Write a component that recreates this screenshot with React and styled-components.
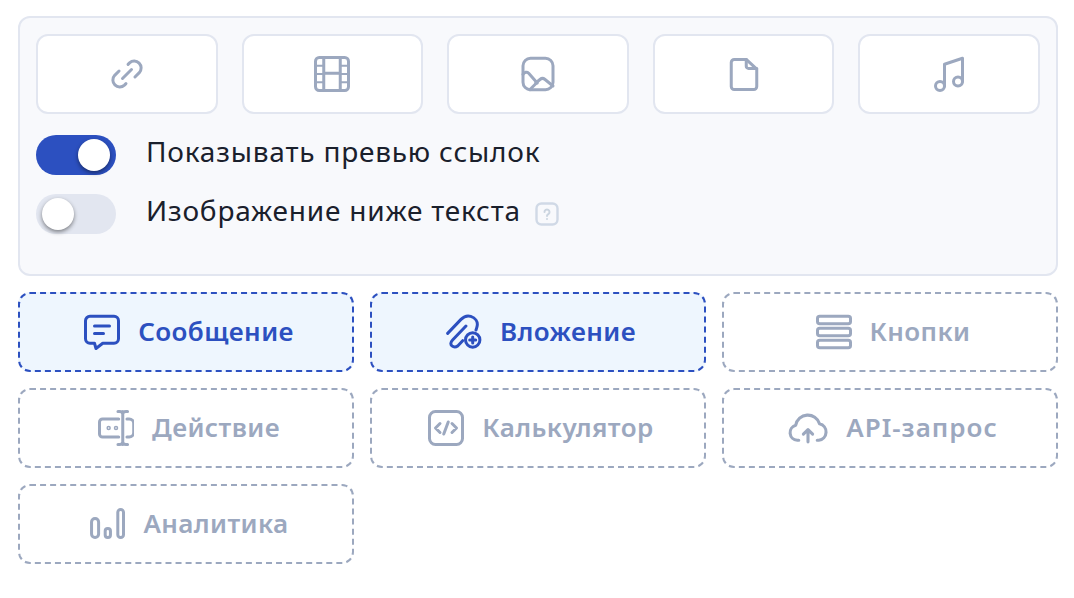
import React from 'react';
import styled, { createGlobalStyle } from 'styled-components';

const GlobalStyle = createGlobalStyle`
  html, body {
    margin: 0;
    padding: 0;
    background: #ffffff;
  }
  * {
    box-sizing: border-box;
  }
`;

const Page = styled.div`
  width: 1074px;
  height: 598px;
  padding: 16px 16px 0 18px;
  font-family: 'Noto Sans', sans-serif;
  overflow: hidden;
`;

const Panel = styled.section`
  height: 260px;
  padding: 16px;
  background: #f8f9fc;
  border: 2px solid #e2e6f0;
  border-radius: 12px;
`;

const MediaRow = styled.div`
  display: grid;
  grid-template-columns: repeat(5, 1fr);
  gap: 24px;
`;

const MediaTile = styled.button`
  display: flex;
  align-items: center;
  justify-content: center;
  height: 80px;
  padding: 0;
  color: #9ca8bf;
  background: #ffffff;
  border: 2px solid #e2e6f0;
  border-radius: 12px;
`;

const Options = styled.div`
  display: flex;
  flex-direction: column;
  gap: 19px;
  margin-top: 21px;
`;

const Option = styled.label`
  display: flex;
  align-items: center;
  height: 40px;
  gap: 30px;
`;

const Track = styled.span`
  position: relative;
  flex: none;
  width: 80px;
  height: 40px;
  border-radius: 20px;
  background: ${(p) => (p.$on ? '#2c50c0' : '#e2e6f0')};
`;

const Knob = styled.span`
  position: absolute;
  top: 4px;
  left: ${(p) => (p.$on ? '42px' : '6px')};
  width: 32px;
  height: 32px;
  border-radius: 50%;
  background: #ffffff;
  box-shadow: 0 2px 4px rgba(0, 0, 0, 0.45);
`;

const OptionText = styled.span`
  padding-bottom: 8px;
  font-size: 28px;
  line-height: 36px;
  letter-spacing: 0.8px;
  color: #1a202c;
`;

const Hint = styled.span`
  display: inline-flex;
  margin-left: -17px;
`;

const Blocks = styled.div`
  display: grid;
  grid-template-columns: repeat(3, 336px);
  gap: 16px;
  margin-top: 16px;
`;

const Block = styled.button`
  display: flex;
  align-items: center;
  justify-content: center;
  gap: 18px;
  height: 80px;
  padding: 0 0 0 6px;
  font-family: inherit;
  font-size: 26px;
  font-weight: 600;
  color: ${(p) => (p.$active ? '#2c50c0' : '#9ca8bf')};
  background: ${(p) => (p.$active ? '#eef6fe' : '#ffffff')};
  border: 2px dashed ${(p) => (p.$active ? '#2c50c0' : '#9ca8bf')};
  border-radius: 12px;
`;

const BlockLabel = styled.span`
  padding-bottom: 2px;
  letter-spacing: ${(p) => (p.$wide ? '1px' : '0.4px')};
`;

const Icon = ({ children, size = 36, box = 24 }) => (
  <svg
    width={size}
    height={size}
    viewBox={`0 0 ${box} ${box}`}
    fill="none"
    stroke="currentColor"
    strokeWidth={2}
    strokeLinecap="round"
    strokeLinejoin="round"
    style={{ flex: 'none', display: 'block' }}
  >
    {children}
  </svg>
);

const LinkIcon = () => (
  <Icon>
    <path d="M12.700 5.600l1-1a4.600 4.600 0 0 1 6.500 6.500l-2.900 2.900" />
    <path d="M11.300 18.400l-1 1a4.600 4.600 0 0 1-6.500-6.500l2.900-2.900" />
    <path d="M9 15l6-6" />
  </Icon>
);

const FilmIcon = () => (
  <Icon>
    <rect x="1" y="1" width="22" height="22" rx="2.500" />
    <path d="M6.500 1v22M17.500 1v22M6.500 11.500h11" />
    <path strokeWidth="1.400" d="M1 6.500h5.500M1 12h5.500M1 17.500h5.500M17.500 6.500H23M17.500 12H23M17.500 17.500H23" />
  </Icon>
);

const ImageIcon = () => (
  <Icon>
    <rect x="2" y="1.500" width="20" height="21" rx="5" />
    <path d="M2 12.300c1-1.500 2.500-2 3.800-.8l5.700 6.500" />
    <path d="M11 18l-4.500 4.500" />
    <path d="M10.500 18l3-2.500c1-.8 2-.8 3 0l5.500 4.500" />
  </Icon>
);

const FileIcon = () => (
  <Icon>
    <path d="M5.500 2.300h8l7 6.500v11.500a2 2 0 0 1-2 2h-13a2 2 0 0 1-2-2V4.300a2 2 0 0 1 2-2z" />
    <path d="M13.500 2.300v4.500a1.500 1.500 0 0 0 1.500 1.500h5.500" />
  </Icon>
);

const MusicIcon = () => (
  <Icon>
    <path d="M9 20V5.500L21 1.500V17" />
    <circle cx="6" cy="20" r="3" />
    <circle cx="18" cy="17" r="3" />
  </Icon>
);

const MessageIcon = () => (
  <Icon>
    <path d="M4 1.500h16a3 3 0 0 1 3 3v12a3 3 0 0 1-3 3h-7.500L8 23l-1-3.500H4a3 3 0 0 1-3-3v-12a3 3 0 0 1 3-3z" />
    <path d="M7 8h10M7 13h6" />
  </Icon>
);

const AttachIcon = () => (
  <Icon>
    <path d="M1.100 12.900L10 3.600c2-2 4-2.800 6.500-2 3 1 4.800 3.500 4.300 6.200-.2 1-.5 2-.8 2.900" />
    <path d="M13.300 8l-8.900 9.300c-1.500 1.600-1.500 3-.4 4 1.200 1 2.700.8 3.800 0l3.300-3.500" />
    <circle cx="17.800" cy="17.300" r="4.800" />
    <path d="M17.800 15.300v4M15.800 17.300h4" />
  </Icon>
);

const ButtonsIcon = () => (
  <Icon>
    <rect x="1" y="1.500" width="22" height="5" rx="1.500" />
    <rect x="1" y="9.500" width="22" height="5" rx="1.500" />
    <rect x="1" y="17.500" width="22" height="5" rx="1.500" />
  </Icon>
);

const ActionIcon = () => (
  <Icon>
    <path d="M13.800 6H3a2 2 0 0 0-2 2v8a2 2 0 0 0 2 2h10.800" />
    <path d="M19.300 6h1.500a3 3 0 0 1 3 3v6a3 3 0 0 1-3 3h-1.500" />
    <path d="M16.500 1v22M13.300 1h1c1.300 0 2.200.8 2.200 1.800 0-1 .9-1.800 2.200-1.800h1M13.300 23h1c1.300 0 2.200-.8 2.200-1.800 0 1 .9 1.800 2.200 1.800h1" />
    <circle cx="7.100" cy="12" r=".5" />
    <circle cx="12" cy="12" r=".5" />
  </Icon>
);

const CodeIcon = () => (
  <Icon>
    <rect x="1" y="1" width="22" height="22" rx="4" />
    <path d="M8 9l-3 3 3 3M16 9l3 3-3 3M13.500 8l-3 8" />
  </Icon>
);

const CloudIcon = () => (
  <Icon size={40} box={26}>
    <path d="M7 21H6a5 5 0 0 1-1-9.800 8 8 0 0 1 15.500-1A5.500 5.500 0 0 1 20 21h-1" />
    <path d="M13 22v-8M10 17l3-3 3 3" />
  </Icon>
);

const ChartIcon = () => (
  <Icon>
    <rect x="1.700" y="8.300" width="4.700" height="12.700" rx="2.300" />
    <rect x="10.800" y="15" width="3.500" height="6" rx="1.700" />
    <rect x="19.200" y="2.300" width="3.800" height="18.700" rx="1.900" />
  </Icon>
);

const HintIcon = () => (
  <svg width="26" height="26" viewBox="0 0 26 26" fill="none" style={{ display: 'block' }}>
    <rect x="2.500" y="2.500" width="21" height="21" rx="5" stroke="#d0d9e6" strokeWidth="2.400" />
    <path d="M10.500 11a2.500 2.500 0 1 1 3.800 2.100c-.9.600-1.300 1-1.300 1.900M13 18v.01" stroke="#cbd5e0" strokeWidth="2" strokeLinecap="round" />
  </svg>
);

const media = [LinkIcon, FilmIcon, ImageIcon, FileIcon, MusicIcon];

const blocks = [
  { label: 'Сообщение', Glyph: MessageIcon, active: true },
  { label: 'Вложение', Glyph: AttachIcon, active: true },
  { label: 'Кнопки', Glyph: ButtonsIcon },
  { label: 'Действие', Glyph: ActionIcon },
  { label: 'Калькулятор', Glyph: CodeIcon },
  { label: 'API-запрос', Glyph: CloudIcon, wide: true },
  { label: 'Аналитика', Glyph: ChartIcon },
];

export default function App() {
  return (
    <Page>
      <GlobalStyle />
      <Panel>
        <MediaRow>
          {media.map((Glyph, i) => (
            <MediaTile key={i}>
              <Glyph />
            </MediaTile>
          ))}
        </MediaRow>
        <Options>
          <Option>
            <Track $on>
              <Knob $on />
            </Track>
            <OptionText>Показывать превью ссылок</OptionText>
          </Option>
          <Option>
            <Track>
              <Knob />
            </Track>
            <OptionText>Изображение ниже текста</OptionText>
            <Hint>
              <HintIcon />
            </Hint>
          </Option>
        </Options>
      </Panel>
      <Blocks>
        {blocks.map(({ label, Glyph, active, wide }) => (
          <Block key={label} $active={active}>
            <Glyph />
            <BlockLabel $wide={wide}>{label}</BlockLabel>
          </Block>
        ))}
      </Blocks>
    </Page>
  );
}
